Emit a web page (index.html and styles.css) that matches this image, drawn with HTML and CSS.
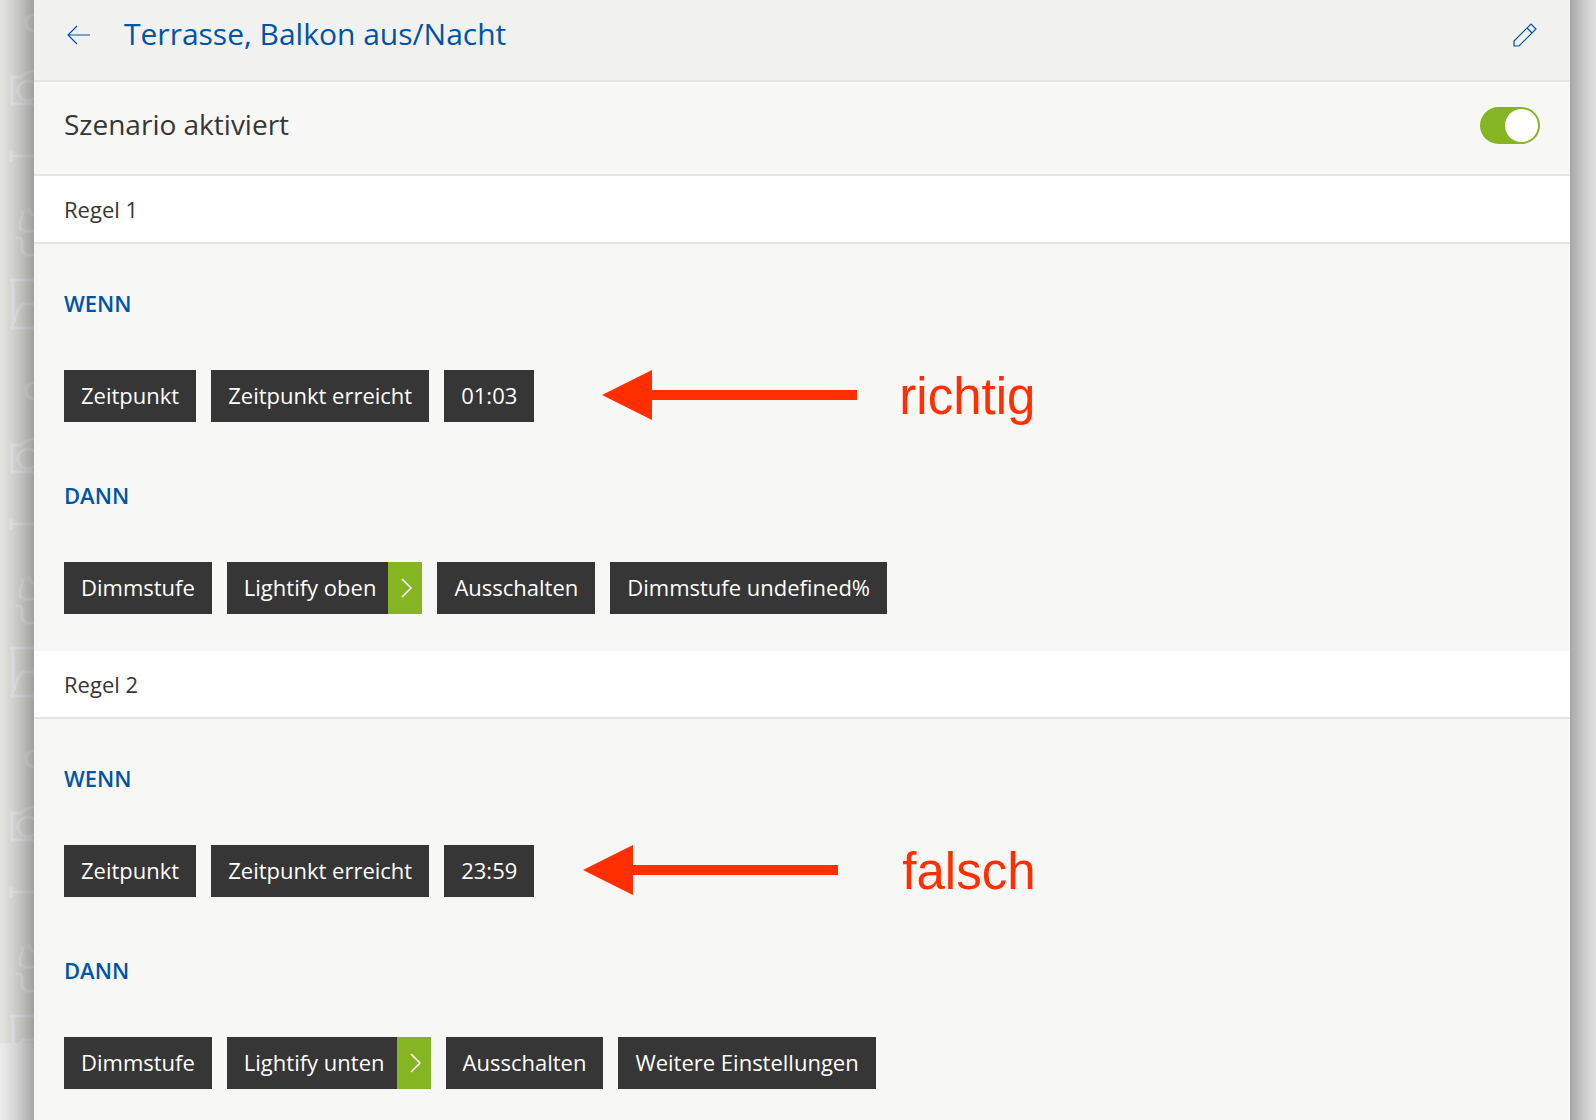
FILE: index.html
```html
<!DOCTYPE html>
<html lang="de">
    <head>
        <meta charset="UTF-8" />
        <meta name="viewport" content="width=device-width, initial-scale=1.0" />
        <title>Terrasse, Balkon aus/Nacht</title>
        <link rel="stylesheet" href="styles.css">
    </head>
    <body>
        <div class="page">
            <!-- faint icon wallpaper behind the dialog -->
            <svg class="wallpaper" aria-hidden="true">
                <defs>
                    <pattern id="icons" width="34" height="368" patternUnits="userSpaceOnUse">
                        <g fill="none" stroke="#f8f8fc" stroke-width="3">
                            <path d="M34 15a8 8 0 0 0 0 16" />
                            <path d="M10 77h11l4-4 9-2M12 77v29M10 104h24" />
                            <circle cx="28" cy="91" r="10" />
                            <path d="M11 151v11M11 156h23" />
                            <path d="M23 211c0 8-4 10-3 16 2 6 8 4 14 4M29 208c0 5 3 7 5 8M16 238c6-1 6 2 6 7 0 7 1 10 6 10h6" />
                            <path d="M10 280h24M13 280v50M10 328h24M14 322l4-12 5-6h11" />
                        </g>
                    </pattern>
                </defs>
                <rect width="34" height="100%" fill="url(#icons)" />
            </svg>
            <main class="dialog">
                <header class="dialog-header">
                    <button type="button" class="btn-icon" aria-label="Zurück">
                        <svg width="24" height="20" viewBox="0 0 24 20">
                            <path d="M10 1L1 10l9 9M1 10h22" />
                        </svg>
                    </button>
                    <h1>Terrasse, Balkon aus/Nacht</h1>
                    <button type="button" class="btn-icon" aria-label="Bearbeiten">
                        <svg width="24" height="24" viewBox="0 0 24 24">
                            <path d="M1 23v-5L18 1l5 5L6 23zM14 5l5 5" />
                        </svg>
                    </button>
                </header>
                <div class="status-row">
                    <label for="active">Szenario aktiviert</label>
                    <input type="checkbox" id="active" class="toggle" checked />
                </div>
                <section class="rule">
                    <h2>Regel 1</h2>
                    <div class="rule-body">
                        <h3>WENN</h3>
                        <div class="chips">
                            <button type="button" class="chip">Zeitpunkt</button>
                            <button type="button" class="chip">Zeitpunkt erreicht</button>
                            <button type="button" class="chip">01:03</button>
                            <div class="note note-right">
                                <svg width="255" height="50" viewBox="0 0 255 50" aria-hidden="true">
                                    <path d="M0 25L50 0v20h205v10H50v20z" />
                                </svg>
                                <span>richtig</span>
                            </div>
                        </div>
                        <h3>DANN</h3>
                        <div class="chips">
                            <button type="button" class="chip">Dimmstufe</button>
                            <button type="button" class="chip chip-more">
                                Lightify oben
                                <span class="chip-arrow">
                                    <svg width="12" height="20" viewBox="0 0 12 20"><path d="M1 1l9 9-9 9" /></svg>
                                </span>
                            </button>
                            <button type="button" class="chip">Ausschalten</button>
                            <button type="button" class="chip">Dimmstufe undefined%</button>
                        </div>
                    </div>
                </section>
                <section class="rule">
                    <h2>Regel 2</h2>
                    <div class="rule-body">
                        <h3>WENN</h3>
                        <div class="chips">
                            <button type="button" class="chip">Zeitpunkt</button>
                            <button type="button" class="chip">Zeitpunkt erreicht</button>
                            <button type="button" class="chip">23:59</button>
                            <div class="note note-wrong">
                                <svg width="255" height="50" viewBox="0 0 255 50" aria-hidden="true">
                                    <path d="M0 25L50 0v20h205v10H50v20z" />
                                </svg>
                                <span>falsch</span>
                            </div>
                        </div>
                        <h3>DANN</h3>
                        <div class="chips">
                            <button type="button" class="chip">Dimmstufe</button>
                            <button type="button" class="chip chip-more">
                                Lightify unten
                                <span class="chip-arrow">
                                    <svg width="12" height="20" viewBox="0 0 12 20"><path d="M1 1l9 9-9 9" /></svg>
                                </span>
                            </button>
                            <button type="button" class="chip">Ausschalten</button>
                            <button type="button" class="chip">Weitere Einstellungen</button>
                        </div>
                    </div>
                </section>
            </main>
        </div>
    </body>
</html>
```

FILE: styles.css
```css
* {
    padding: 0;
    margin: 0;
    box-sizing: border-box;
}
body {
    font-family: 'Open Sans', 'Noto Sans', sans-serif;
    font-size: 22px;
    line-height: 30px;
    color: #363636;
    background-color: #f7f7f7;
}
.page {
    position: relative;
    height: 100vh;
    padding: 0 26px 0 34px;
    overflow: hidden;
}
.wallpaper {
    position: absolute;
    top: 0;
    left: 0;
    width: 34px;
    height: calc(100% - 77px);
    background-color: #ededea;
}
/* runs past the top and bottom of the window, so the shadow stays even */
.dialog {
    position: relative;
    min-height: calc(100% + 160px);
    margin-top: -80px;
    background-color: #f7f7f5;
    box-shadow: 0 0 45px rgba(0, 0, 0, 0.65);
}
.dialog-header {
    display: flex;
    align-items: center;
    height: 162px;
    padding: 80px 33px 12px;
    background-color: #f1f1ef;
    border-bottom: 2px solid #e4e4e2;
}
.dialog-header h1 {
    flex: 1;
    margin-left: 33px;
    font-size: 30px;
    font-weight: 400;
    color: #0054a6;
}
.btn-icon {
    display: flex;
    padding-top: 2px;
    border: none;
    background: none;
    cursor: pointer;
}
.btn-icon svg {
    fill: none;
    stroke: #0054a6;
    stroke-width: 1.2;
}
.status-row {
    display: flex;
    justify-content: space-between;
    align-items: center;
    height: 94px;
    padding: 0 30px 6px;
    font-size: 28px;
    border-bottom: 2px solid #e4e4e2;
}
.status-row label {
    padding-bottom: 2px;
}
.toggle {
    appearance: none;
    display: flex;
    justify-content: flex-end;
    width: 60px;
    height: 37px;
    padding: 2px;
    border-radius: 19px;
    background-color: #86b524;
    cursor: pointer;
}
.toggle::before {
    content: '';
    width: 33px;
    height: 33px;
    border-radius: 50%;
    background-color: #ffffff;
}
.toggle:not(:checked) {
    justify-content: flex-start;
    background-color: #c4c4c2;
}
.rule h2 {
    padding: 18px 30px;
    font-size: 22px;
    font-weight: 400;
    background-color: #ffffff;
    border-bottom: 2px solid #e4e4e2;
}
.rule-body {
    padding: 44px 30px 37px;
}
.rule h3 {
    margin-bottom: 52px;
    font-size: 22px;
    font-weight: 600;
    color: #0054a6;
}
.chips {
    display: flex;
    align-items: flex-start;
    gap: 15px;
    height: 52px;
}
.chips + h3 {
    margin-top: 58px;
}
.chip {
    display: flex;
    align-items: center;
    height: 52px;
    padding: 0 17px 2px;
    border: none;
    font: inherit;
    white-space: nowrap;
    color: #ffffff;
    background-color: #363636;
    cursor: pointer;
}
.chip-more {
    gap: 12px;
    padding-right: 0;
}
.chip-arrow {
    display: flex;
    align-self: flex-start;
    justify-content: center;
    align-items: center;
    width: 34px;
    height: 52px;
    padding-left: 4px;
    background-color: #86b524;
}
.chip-arrow svg {
    fill: none;
    stroke: #ffffff;
    stroke-width: 1.5;
}
.note {
    display: flex;
    align-items: center;
    font-family: 'Liberation Sans', Arial, sans-serif;
    font-size: 51px;
    color: #ff2f00;
}
.note svg {
    fill: #ff2f00;
}
.note span {
    padding-top: 3px;
}
.note-right {
    gap: 42px;
    margin-left: 53px;
}
.note-wrong {
    gap: 64px;
    margin-left: 34px;
}
```
